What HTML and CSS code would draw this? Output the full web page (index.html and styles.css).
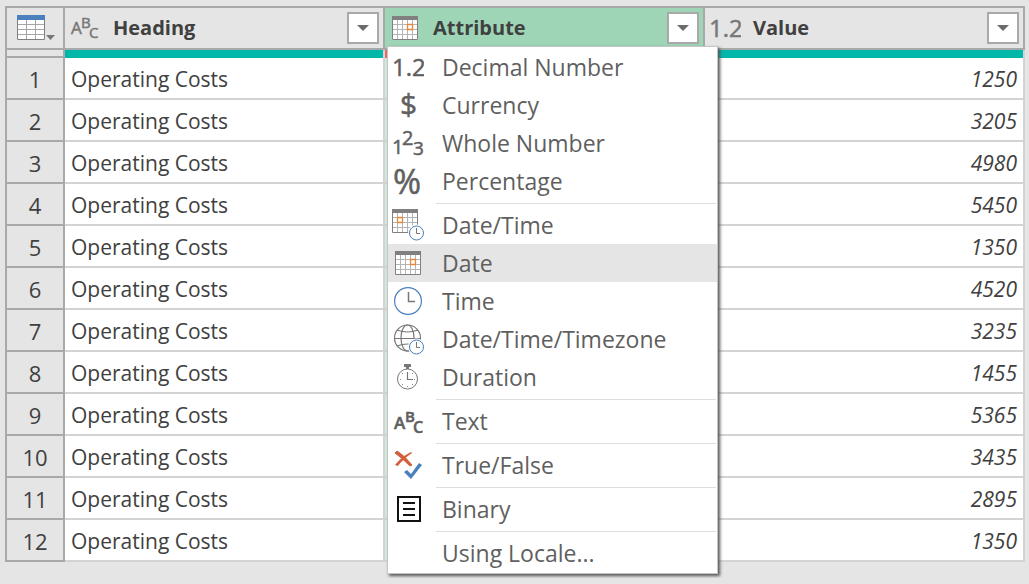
FILE: index.html
```html
<!DOCTYPE html>
<html lang="en">
<head>
<meta charset="utf-8">
<meta name="viewport" content="width=device-width, initial-scale=1">
<title>Query preview</title>
<link rel="stylesheet" href="styles.css">
</head>
<body>
<svg class="symbols" aria-hidden="true">
  <symbol id="calendar" viewBox="0 0 26 24">
    <path d="M0 0H26V24H0Z" fill="#fff"/>
    <path d="M5.500 4V23M10.500 4V23M15.500 4V23M20.500 4V23M1 8.500H25M1 13.500H25M1 18.500H25" stroke="#b4b4b4" fill="none"/>
    <path d="M.5 .5H25.500V23.500H.5Z" stroke="#808080" fill="none"/>
    <path d="M0 0H26V4H0Z" fill="#808080"/>
    <path d="M15.500 8.500H20.500V13.500H15.500Z" stroke="#e8873a" stroke-width="1.300" fill="#fff"/>
  </symbol>
  <symbol id="clock" viewBox="0 0 28 28">
    <circle cx="14" cy="14" r="13.400" fill="#fff" stroke="#4a80bd" stroke-width="1.200"/>
    <path d="M14.500 5V14.500H21" stroke="#777" stroke-width="1.500" fill="none"/>
  </symbol>
</svg>

<main class="sheet">
  <table class="grid">
    <colgroup><col class="col-index"><col><col><col></colgroup>
    <thead>
      <tr class="head">
        <th class="corner">
          <button class="table-button" type="button" aria-label="Table options">
            <svg width="40" height="28" viewBox="0 0 40 28" aria-hidden="true">
              <path d="M1 1H29V26H1Z" fill="#fff"/>
              <path d="M10.500 6V25M19.500 6V25M2 10.500H28M2 15.500H28M2 20.500H28" stroke="#a6a6a6" fill="none"/>
              <path d="M1.500 1.500H28.500V25.500H1.500Z" stroke="#808080" fill="none"/>
              <path d="M1 1H29V6H1Z" fill="#4a80bd"/>
              <path d="M30 21H39L34.500 26Z" fill="#777"/>
            </svg>
          </button>
        </th>
        <th>
          <div class="head-cell">
            <svg class="type" aria-hidden="true"><text class="glyph" x="2" y="22" font-size="17">A</text><text class="glyph" x="12" y="16" font-size="15">B</text><text class="glyph" x="20" y="26" font-size="15">C</text></svg>
            <span class="name">Heading</span>
            <button class="filter" type="button" aria-label="Filter Heading"><svg width="12" height="6" aria-hidden="true"><path d="M0 0H12L6 6Z" fill="#6b6b6b"/></svg></button>
          </div>
        </th>
        <th class="active">
          <div class="head-cell">
            <svg class="type" aria-hidden="true"><use href="#calendar" x="3" y="4" width="26" height="24"/></svg>
            <span class="name">Attribute</span>
            <button class="filter" type="button" aria-label="Filter Attribute"><svg width="12" height="6" aria-hidden="true"><path d="M0 0H12L6 6Z" fill="#6b6b6b"/></svg></button>
          </div>
          <div class="menu" role="menu" aria-label="Data type">
            <button class="item" type="button" role="menuitem"><svg class="icon" aria-hidden="true"><text class="glyph" x="0" y="25" font-size="24">1.2</text></svg>Decimal Number</button>
            <button class="item" type="button" role="menuitem"><svg class="icon" aria-hidden="true"><text class="glyph" x="8" y="26" font-size="30">$</text></svg>Currency</button>
            <button class="item" type="button" role="menuitem"><svg class="icon" aria-hidden="true"><text class="glyph" x="0" y="27" font-size="20">1</text><text class="glyph" x="10" y="18" font-size="20">2</text><text class="glyph" x="21" y="28" font-size="19">3</text></svg>Whole Number</button>
            <button class="item" type="button" role="menuitem"><svg class="icon" aria-hidden="true"><text class="glyph" x="1" y="29" font-size="34">%</text></svg>Percentage</button>
            <hr>
            <button class="item" type="button" role="menuitem"><svg class="icon" aria-hidden="true">
              <path d="M0 0H26V24H0Z" fill="#fff"/>
              <path d="M5.500 4V23M10.500 4V23M15.500 4V23M20.500 4V23M1 8.500H25M1 13.500H25M1 18.500H25" stroke="#b4b4b4" fill="none"/>
              <path d="M.5 .5H25.500V23.500H.5Z" stroke="#808080" fill="none"/>
              <path d="M0 0H26V4H0Z" fill="#808080"/>
              <path d="M5.500 8.500H10.500V13.500H5.500Z" stroke="#e8873a" stroke-width="1.300" fill="#fff"/>
              <circle cx="24.500" cy="24" r="8.500" fill="#fff"/>
              <circle cx="24.500" cy="24" r="7" fill="#fff" stroke="#4a80bd"/>
              <path d="M24.500 19V24.500H28" stroke="#777" fill="none"/>
            </svg>Date/Time</button>
            <button class="item selected" type="button" role="menuitem"><svg class="icon" aria-hidden="true"><use href="#calendar" x="3" y="4" width="26" height="24"/></svg>Date</button>
            <button class="item" type="button" role="menuitem"><svg class="icon" aria-hidden="true"><use href="#clock" x="2" y="2" width="28" height="28"/></svg>Time</button>
            <button class="item" type="button" role="menuitem"><svg class="icon" aria-hidden="true">
              <g fill="none" stroke="#777" stroke-width="1.200"><circle cx="15.500" cy="15" r="13"/><ellipse cx="15.500" cy="15" rx="6.500" ry="13"/><path d="M2 15.500H29M5 7Q15.500 11 26 7M5 23Q15.500 19 26 23"/></g>
              <circle cx="24.500" cy="24" r="8.500" fill="#fff"/>
              <circle cx="24.500" cy="24" r="7" fill="#fff" stroke="#4a80bd"/>
              <path d="M24.500 19V24.500H28" stroke="#777" fill="none"/>
            </svg>Date/Time/Timezone</button>
            <button class="item" type="button" role="menuitem"><svg class="icon" aria-hidden="true">
              <circle cx="15.500" cy="18" r="10" fill="#fff" stroke="#777"/>
              <path d="M12 3H19V6H17V8H14V6H12Z" fill="#777"/>
              <path d="M15.500 11V18.500H21" fill="none" stroke="#777" stroke-width="1.200"/>
              <path d="M15.500 25v1M8 18.500h1M22 18.500h1M10 12l1 1M21 12l-1 1M10 24l1-1M21 24l-1-1" stroke="#888"/>
            </svg>Duration</button>
            <hr>
            <button class="item" type="button" role="menuitem"><svg class="icon" aria-hidden="true"><text class="glyph bold" x="2" y="24" font-size="17">A</text><text class="glyph bold" x="13" y="17" font-size="15">B</text><text class="glyph bold" x="21" y="28" font-size="16">C</text></svg>Text</button>
            <hr>
            <button class="item" type="button" role="menuitem"><svg class="icon" aria-hidden="true">
              <path d="M3 4L5 2Q12 6 20 16L18 17Q10 9 3 4Z" fill="#d2603f" stroke="#d2603f"/>
              <path d="M19 3L20 4Q11 10 6 17L3 16Q9 8 19 3Z" fill="#d2603f"/>
              <path d="M12 23L15 21L19 25L27 14L30 16L19 30Z" fill="#4a80bd"/>
            </svg>True/False</button>
            <hr>
            <button class="item" type="button" role="menuitem"><svg class="icon" aria-hidden="true">
              <path d="M6 4H28V28H6Z" fill="#fff" stroke="#111" stroke-width="2"/>
              <path d="M11 10H23M11 16H23M11 22H23" stroke="#111" stroke-width="2"/>
            </svg>Binary</button>
            <hr>
            <button class="item" type="button" role="menuitem"><span class="icon"></span>Using Locale...</button>
          </div>
        </th>
        <th>
          <div class="head-cell">
            <svg class="type" aria-hidden="true"><text class="glyph" x="0" y="25" font-size="24">1.2</text></svg>
            <span class="name">Value</span>
            <button class="filter" type="button" aria-label="Filter Value"><svg width="12" height="6" aria-hidden="true"><path d="M0 0H12L6 6Z" fill="#6b6b6b"/></svg></button>
          </div>
        </th>
      </tr>
      <tr class="quality"><td class="index"></td><td></td><td class="errors"></td><td></td></tr>
    </thead>
    <tbody>
      <tr><th class="index" scope="row">1</th><td>Operating Costs</td><td class="picked"></td><td class="number">1250</td></tr>
      <tr><th class="index" scope="row">2</th><td>Operating Costs</td><td class="picked"></td><td class="number">3205</td></tr>
      <tr><th class="index" scope="row">3</th><td>Operating Costs</td><td class="picked"></td><td class="number">4980</td></tr>
      <tr><th class="index" scope="row">4</th><td>Operating Costs</td><td class="picked"></td><td class="number">5450</td></tr>
      <tr><th class="index" scope="row">5</th><td>Operating Costs</td><td class="picked"></td><td class="number">1350</td></tr>
      <tr><th class="index" scope="row">6</th><td>Operating Costs</td><td class="picked"></td><td class="number">4520</td></tr>
      <tr><th class="index" scope="row">7</th><td>Operating Costs</td><td class="picked"></td><td class="number">3235</td></tr>
      <tr><th class="index" scope="row">8</th><td>Operating Costs</td><td class="picked"></td><td class="number">1455</td></tr>
      <tr><th class="index" scope="row">9</th><td>Operating Costs</td><td class="picked"></td><td class="number">5365</td></tr>
      <tr><th class="index" scope="row">10</th><td>Operating Costs</td><td class="picked"></td><td class="number">3435</td></tr>
      <tr><th class="index" scope="row">11</th><td>Operating Costs</td><td class="picked"></td><td class="number">2895</td></tr>
      <tr><th class="index" scope="row">12</th><td>Operating Costs</td><td class="picked"></td><td class="number">1350</td></tr>
    </tbody>
  </table>
</main>
</body>
</html>
```
FILE: styles.css
```css
* { box-sizing: border-box; }

body {
  margin: 0;
  background: #e5e5e5;
  color: #404040;
  font-family: "Open Sans", "Noto Sans", sans-serif;
  font-size: 21px;
  line-height: 28px;
}

button {
  font: inherit;
  color: inherit;
  cursor: pointer;
}

.symbols { display: none; }

.glyph {
  fill: #777;
  stroke: #777;
  stroke-width: 0.5px;
}

.sheet { padding: 6px 4px 16px 5px; }

.grid {
  width: 100%;
  table-layout: fixed;
  border-collapse: separate;
  border-spacing: 0;
}

.col-index { width: 60px; }

.grid th,
.grid td {
  height: 42px;
  padding: 2px 6px 0;
  border: 0 solid #d3d3d3;
  border-width: 0 2px 2px 0;
  background: #fff;
  font-weight: 400;
  text-align: left;
  white-space: nowrap;
}

.grid .head th {
  height: 44px;
  padding: 0 4px;
  border-color: #a9a9a9;
  border-top-width: 2px;
  background: #e5e5e5;
}

.grid .head .corner {
  padding: 0 9px;
  border-left-width: 2px;
}

.grid .head .active {
  position: relative;
  background: #9fd5b7;
}

.table-button {
  display: flex;
  padding: 0;
  border: 0;
  background: none;
}

.head-cell {
  display: flex;
  align-items: center;
}

.type {
  flex: none;
  width: 32px;
  height: 32px;
  margin-right: 12px;
}

.name {
  flex: 1;
  font-size: 20px;
  font-weight: 700;
}

.filter {
  display: flex;
  align-items: center;
  justify-content: center;
  width: 32px;
  height: 32px;
  padding: 0;
  border: 2px solid #a9a9a9;
  background: #fff;
}

.grid .quality td {
  height: 8px;
  padding: 0;
  border-width: 0 2px 0 0;
  background: #00b8aa;
}

.grid .quality .errors { background: #fd625e; }

.grid .index,
.grid .quality .index {
  border-color: #a9a9a9;
  border-width: 0 2px 2px;
  background: #e5e5e5;
  font-size: 22px;
  text-align: center;
}

.grid .picked { background: #d3ecdf; }

.grid .number {
  font-style: italic;
  text-align: right;
}

.menu {
  position: absolute;
  z-index: 1;
  top: 38px;
  left: 2px;
  right: -15px;
  padding: 1px 0;
  border: 1px solid #c6c6c6;
  background: #fff;
  box-shadow: 2px 2px 3px #555;
  color: #5f5f5f;
  font-size: 23px;
}

.menu .glyph {
  fill: #606060;
  stroke: #606060;
}

.menu .bold { font-weight: 600; }

.item {
  display: flex;
  align-items: center;
  gap: 18px;
  width: 100%;
  height: 38px;
  padding: 0 4px;
  border: 0;
  background: none;
  text-align: left;
}

.item.selected,
.item:hover { background: #e5e5e5; }

.icon {
  flex: none;
  width: 32px;
  height: 32px;
}

.menu hr {
  height: 1px;
  margin: 3px 1px 2px 48px;
  border: 0;
  background: #dedede;
}
```
